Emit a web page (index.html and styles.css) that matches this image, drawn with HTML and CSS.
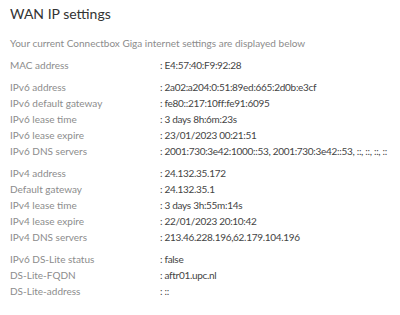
FILE: index.html
```html
<!DOCTYPE html>
<html lang="en">
<head>
  <meta charset="UTF-8">
  <title>WAN IP settings</title>
  <link rel="stylesheet" href="styles.css">
</head>
<body>
  <div class="page">
    <h1 class="title">WAN IP settings</h1>
    <p class="intro">Your current Connectbox Giga internet settings are displayed below</p>

    <div class="group first">
      <div class="row"><span class="label">MAC address</span><span class="value">: E4:57:40:F9:92:28</span></div>
    </div>

    <div class="group">
      <div class="row"><span class="label">IPv6 address</span><span class="value">: 2a02:a204:0:51:89ed:665:2d0b:e3cf</span></div>
      <div class="row"><span class="label">IPv6 default gateway</span><span class="value">: fe80::217:10ff:fe91:6095</span></div>
      <div class="row"><span class="label">IPv6 lease time</span><span class="value">: 3 days 8h:6m:23s</span></div>
      <div class="row"><span class="label">IPv6 lease expire</span><span class="value">: 23/01/2023 00:21:51</span></div>
      <div class="row"><span class="label">IPv6 DNS servers</span><span class="value">: 2001:730:3e42:1000::53, 2001:730:3e42::53, ::, ::, ::, ::</span></div>
    </div>

    <div class="group">
      <div class="row"><span class="label">IPv4 address</span><span class="value">: 24.132.35.172</span></div>
      <div class="row"><span class="label">Default gateway</span><span class="value">: 24.132.35.1</span></div>
      <div class="row"><span class="label">IPv4 lease time</span><span class="value">: 3 days 3h:55m:14s</span></div>
      <div class="row"><span class="label">IPv4 lease expire</span><span class="value">: 22/01/2023 20:10:42</span></div>
      <div class="row"><span class="label">IPv4 DNS servers</span><span class="value">: 213.46.228.196,62.179.104.196</span></div>
    </div>

    <div class="group">
      <div class="row"><span class="label">IPv6 DS-Lite status</span><span class="value">: false</span></div>
      <div class="row"><span class="label">DS-Lite-FQDN</span><span class="value">: aftr01.upc.nl</span></div>
      <div class="row"><span class="label">DS-Lite-address</span><span class="value">: ::</span></div>
    </div>
  </div>
</body>
</html>
```
FILE: styles.css
```css
* { margin: 0; padding: 0; box-sizing: border-box; }
body {
  font-family: Lato, Arial, sans-serif;
  background-color: #fff;
  color: #444;
}
.page {
  padding: 4px 10px 0 10px;
}
.title {
  font-size: 14px;
  font-weight: normal;
  color: #333;
  line-height: 20px;
  margin-bottom: 11px;
}
.intro {
  font-size: 10px;
  color: #8c8c8c;
  line-height: 16px;
  margin-bottom: 6px;
}
.group {
  margin-bottom: 6px;
}
.group.first {
  margin-bottom: 6px;
}
.row {
  display: flex;
  font-size: 10px;
  line-height: 16px;
  white-space: nowrap;
}
.label {
  width: 150px;
  flex-shrink: 0;
  color: #8c8c8c;
}
.value {
  color: #444;
  letter-spacing: -0.3px;
}
```
